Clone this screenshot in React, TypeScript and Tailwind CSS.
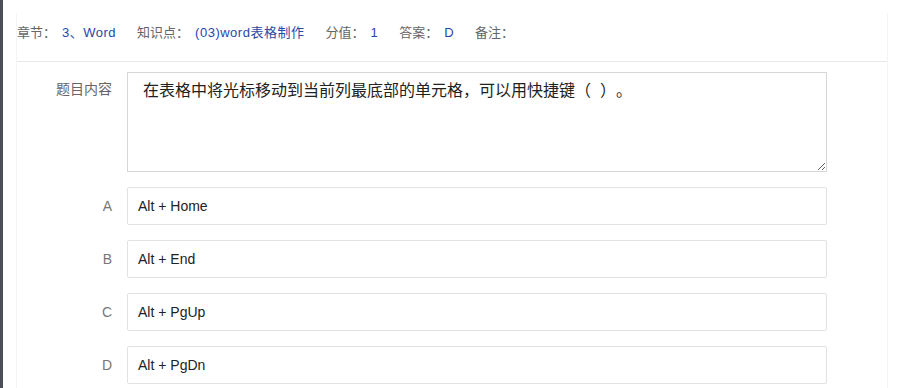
import { useState } from "react"

const meta = [
  { label: "章节：", value: "3、Word" },
  { label: "知识点：", value: "(03)word表格制作" },
  { label: "分值：", value: "1" },
  { label: "答案：", value: "D" },
  { label: "备注：", value: "" },
]

const options = [
  { key: "A", text: "Alt + Home" },
  { key: "B", text: "Alt + End" },
  { key: "C", text: "Alt + PgUp" },
  { key: "D", text: "Alt + PgDn" },
]

export default function App() {
  const [content, setContent] = useState("在表格中将光标移动到当前列最底部的单元格，可以用快捷键（  ）。")

  return (
    <div
      className="flex min-h-screen bg-white"
      style={{ fontFamily: '"Liberation Sans", "Noto Sans CJK SC", sans-serif' }}
    >
      {/* left edge of the sidebar */}
      <div className="w-[3px] shrink-0 bg-[#4b4f58]" />

      <div className="flex-1 pl-[13px] pr-[10px] pt-[13px]">
        <div className="min-h-[375px] border-x border-[#f4f4f4]">
          {/* question info */}
          <div className="flex items-center gap-x-[21px] border-b border-[#e8e8e8] pt-[10px] pb-[18px] text-[13px] leading-[20px]">
            {meta.map((m) => (
              <div key={m.label} className="flex">
                <span className="text-[#666]">{m.label}</span>
                {m.value && (
                  <span className="ml-[6px] tracking-[0.5px] text-[#2947a6]">{m.value}</span>
                )}
              </div>
            ))}
          </div>

          {/* form */}
          <div className="flex flex-col gap-[15px] pt-[10px]">
            <div className="flex">
              <label className="w-[110px] shrink-0 pr-[15px] pt-[7px] text-right text-sm leading-[20px] text-[#666]">
                题目内容
              </label>
              <textarea
                value={content}
                onChange={(e) => setContent(e.target.value)}
                className="h-[100px] w-[700px] border border-[#d6d6d6] px-[15px] py-[6px] text-base leading-[24px] text-[#222] outline-none [text-spacing-trim:space-all]"
              />
            </div>

            {options.map((o) => (
              <div key={o.key} className="flex items-center">
                <label className="w-[110px] shrink-0 pr-[15px] text-right text-sm text-[#777]">
                  {o.key}
                </label>
                <input
                  readOnly
                  value={o.text}
                  className="h-[38px] w-[700px] rounded-[2px] border border-[#e2e2e2] px-[10px] text-sm text-[#222] outline-none"
                />
              </div>
            ))}
          </div>
        </div>
      </div>
    </div>
  )
}
